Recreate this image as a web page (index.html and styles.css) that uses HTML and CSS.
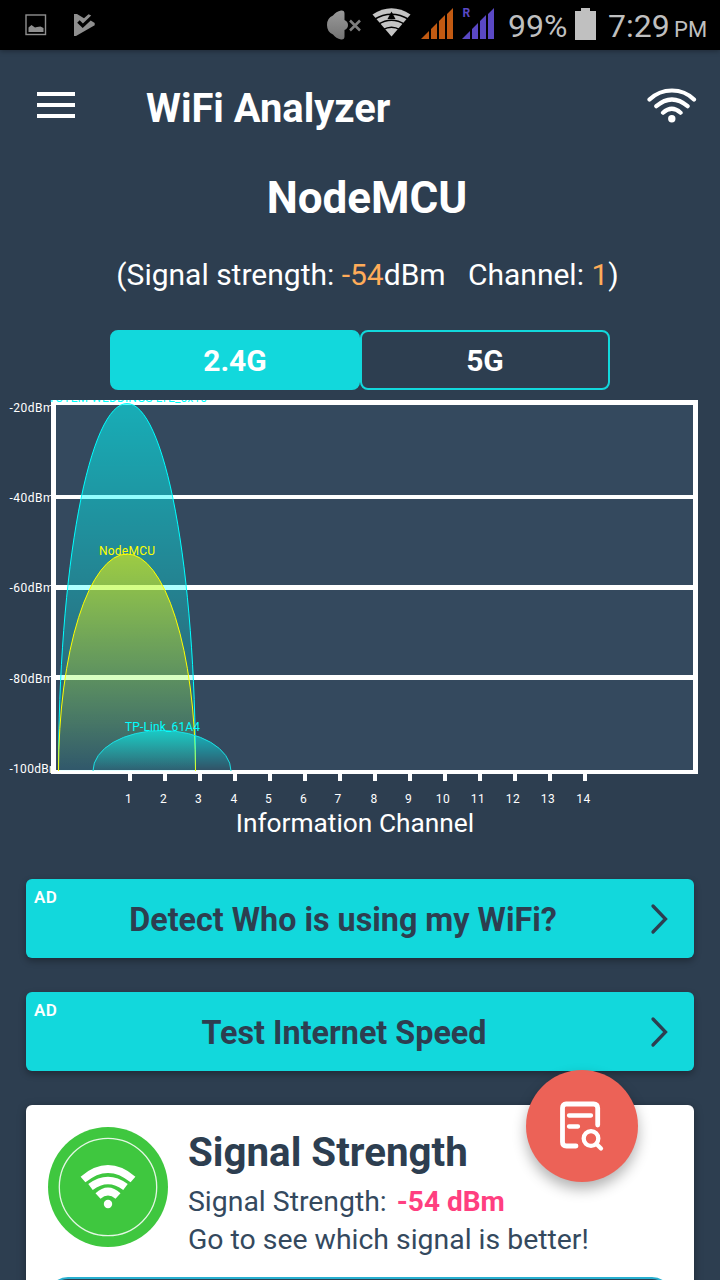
FILE: index.html
```html
<!DOCTYPE html>
<html lang="en">
<head>
<meta charset="utf-8">
<title>WiFi Analyzer</title>
<link rel="stylesheet" href="styles.css">
</head>
<body>
<div class="screen">
  <header class="status">
    <svg class="status-icons" width="500" height="50" viewBox="0 0 500 50">
      <rect x="26" y="15" width="19.500" height="19.500" fill="none" stroke="#8f8f8f" stroke-width="1.400"/>
      <path d="M28.500 32v-4.500l3-2.500 3.500 2.500 2-.5 3.500-.5 3 1.500V32z" fill="#8f8f8f"/>
      <path d="M74 14h3l7 4.200 4.500-4 2.700 1.200-8.300 8.100-3.200-3.200-2.500 2.500 5.500 5.200 8-7.500 4 2.500v2.300L76 36h-2z" fill="#8f8f8f"/>
      <linearGradient id="mute" x1="0" x2="0" y1="0" y2="1"><stop stop-color="#999"/><stop offset="1" stop-color="#747474"/></linearGradient>
      <path d="M341 10.500q3.500-.5 3.500 3V20q3.500 1.500 3.500 5t-3.500 5v6.500q0 3.500-3.500 3-5-1-8-5-6-2.500-6-9.500t6-9.500q3-4 8-5z" fill="url(#mute)"/>
      <path d="M350 20.500l10 10m0-10l-10 10" stroke="#7d7d7d" stroke-width="2.500"/>
      <path d="M391.500 36.500L372.500 14.500Q391.500 2 410.500 14.500z" fill="#c4c4c4"/>
      <path d="M374 19.500q17.500-10.500 35 0M378 24.500q13.500-8.500 27 0M383 29.700q8.500-5 17 0" fill="none" stroke="#000" stroke-width="1.500"/>
      <path d="M391.500 11.500l4 7.500h-8z" fill="#000"/>
      <path d="M421 39l8-8v8zm10-10l6-6v16h-6zm8-8l6-6v24h-6zm8-7l6-6v31h-6z" fill="#c25a12"/>
      <path d="M462 39l8-8v8zm10-10l6-6v16h-6zm8-8l6-6v24h-6zm8-7l6-6v31h-6z" fill="#5a48c4"/>
      <text class="roaming" x="462.500" y="16.500">R</text>
    </svg>
    <span class="percent">99%</span>
    <svg class="battery" width="21" height="32" viewBox="0 0 21 32"><path d="M6 0h9v3h6v29H0V3h6z" fill="#c0c0c0"/></svg>
    <span class="clock">7:29</span><span class="pm">PM</span>
  </header>

  <nav class="toolbar">
    <svg class="menu" width="38" height="26" viewBox="0 0 38 26"><path d="M0 2h38M0 13h38M0 24h38" stroke="#fff" stroke-width="4"/></svg>
    <h1 class="title">WiFi Analyzer</h1>
    <svg class="wifi" width="50" height="36" viewBox="0 0 50 36">
      <path d="M2.500 11.500C15-.5 35-.5 47 11.500M9.300 18.200q15.600-13.500 31.300 0M16 24.700q8.800-8 17.600 0" fill="none" stroke="#fff" stroke-width="4.200" stroke-linecap="round"/>
      <circle cx="24.800" cy="30.700" r="3.700" fill="#fff"/>
    </svg>
  </nav>

  <h2 class="network">NodeMCU</h2>
  <p class="details">(Signal strength: <b>-54</b>dBm &nbsp; Channel: <b>1</b>)</p>
  <div class="tabs">
    <div class="tab active">2.4G</div>
    <div class="tab">5G</div>
  </div>

  <svg class="chart" width="720" height="410" viewBox="0 400 720 410">
    <defs>
      <linearGradient id="cyan" x1="0" x2="0" y1="0" y2="1"><stop stop-color="#0ff" stop-opacity=".55"/><stop offset="1" stop-color="#0ff" stop-opacity=".08"/></linearGradient>
      <linearGradient id="low" x1="0" x2="0" y1="0" y2="1"><stop stop-color="#0ff" stop-opacity=".62"/><stop offset="1" stop-color="#0ff" stop-opacity=".04"/></linearGradient>
      <linearGradient id="yellow" x1="0" x2="0" y1="0" y2="1"><stop stop-color="#ff0" stop-opacity=".56"/><stop offset="1" stop-color="#ff0" stop-opacity="0"/></linearGradient>
    </defs>
    <g class="axis">
      <text x="9.500" y="412" textLength="44">-20dBm</text>
      <text x="9.500" y="502" textLength="44">-40dBm</text>
      <text x="9.500" y="592" textLength="44">-60dBm</text>
      <text x="9.500" y="683" textLength="44">-80dBm</text>
      <text x="9.500" y="773" textLength="50">-100dBm</text>
    </g>
    <rect x="51" y="400" width="647" height="374" fill="#fff"/>
    <path d="M56 405h637v90H56zM56 499h637v86H56zM56 590h637v85H56zM56 680h637v90H56z" fill="#34495e"/>
    <path d="M128 774h4v7h-4zM163 774h4v7h-4zM198 774h4v7h-4zM233 774h4v7h-4zM268 774h4v7h-4zM303 774h4v7h-4zM338 774h4v7h-4zM373 774h4v7h-4zM408 774h4v7h-4zM443 774h4v7h-4zM478 774h4v7h-4zM513 774h4v7h-4zM548 774h4v7h-4zM583 774h4v7h-4z" fill="#fff"/>
    <path class="curve" d="M58.500 771A68.500 367.500 0 0 1 195.500 771" fill="url(#cyan)" stroke="#0ff"/>
    <path class="curve" d="M58.500 771A68.500 217 0 0 1 195.500 771" fill="url(#yellow)" stroke="#ff0"/>
    <path class="curve" d="M93 771A69 40.500 0 0 1 231 771" fill="url(#low)" stroke="#1ce0e4"/>
    <g class="label">
      <text x="48" y="402" textLength="159" fill="#0ff">TOTEM WEDDINGS LTE_0x10</text>
      <text x="99" y="555" textLength="56" fill="#ff0">NodeMCU</text>
      <text x="125" y="731" textLength="75" fill="#0ff">TP-Link_61A4</text>
    </g>
    <g class="ticks">
      <text x="128.500" y="803">1</text><text x="163.500" y="803">2</text><text x="198.500" y="803">3</text><text x="234" y="803">4</text>
      <text x="268.500" y="803">5</text><text x="303.500" y="803">6</text><text x="338" y="803">7</text><text x="374" y="803">8</text>
      <text x="408.500" y="803">9</text><text x="443" y="803">10</text><text x="478" y="803">11</text><text x="513" y="803">12</text>
      <text x="548" y="803">13</text><text x="583.500" y="803">14</text>
    </g>
  </svg>
  <div class="caption">Information Channel</div>

  <a class="promo"><span class="ad">AD</span><span class="promo-text detect">Detect Who is using my WiFi?</span>
    <svg class="chevron" width="20" height="34" viewBox="0 0 20 34"><path d="M3 4l12.500 13L3 30" fill="none" stroke="#2d3e50" stroke-width="3.300" stroke-linecap="round"/></svg></a>
  <a class="promo"><span class="ad">AD</span><span class="promo-text speed">Test Internet Speed</span>
    <svg class="chevron" width="20" height="34" viewBox="0 0 20 34"><path d="M3 4l12.500 13L3 30" fill="none" stroke="#2d3e50" stroke-width="3.300" stroke-linecap="round"/></svg></a>

  <section class="card">
    <div class="card-row">
      <svg class="badge" width="120" height="120" viewBox="0 0 120 120">
        <circle cx="60" cy="60" r="60" fill="#3fc73f"/>
        <circle cx="60" cy="60" r="48.700" fill="none" stroke="#e4f7e4" stroke-width="1.300"/>
        <path d="M35 52.500q25-21 50 0M42.500 60q17.500-13 35 0M50 69q10-9 20 0" fill="none" stroke="#fff" stroke-width="7.500"/>
        <circle cx="60" cy="77" r="4.200" fill="#fff"/>
      </svg>
      <div class="card-copy">
        <h3 class="card-title">Signal Strength</h3>
        <p class="card-line">Signal Strength: <strong>-54 dBm</strong></p>
        <p class="card-line better">Go to see which signal is better!</p>
      </div>
    </div>
    <div class="card-button"></div>
  </section>

  <button class="fab">
    <svg width="48" height="52" viewBox="0 0 48 52" fill="none" stroke="#fff" stroke-width="4.300" stroke-linecap="round" stroke-linejoin="round">
      <path d="M39.700 25V8q0-4-4-4H8Q4.500 4 4.500 8v34q0 4 4 4H18" stroke-width="4.800"/><path d="M11 15.500h22M11 26.500h9"/><circle cx="33" cy="38.500" r="7.300"/><path d="M38.500 44l4.500 4.500"/>
    </svg>
  </button>
</div>
</body>
</html>
```

FILE: styles.css
```css
* { box-sizing: border-box; }
body { margin: 0; background: #2d3e50; font-family: Roboto, "Liberation Sans", sans-serif; color: #fff; }
h1, h2, h3, p { margin: 0; white-space: nowrap; }
.screen { position: relative; width: 720px; height: 1280px; overflow: hidden; display: flex; flex-direction: column; }
.status { height: 50px; flex: none; background: #000; display: flex; color: #bfbfbf; box-shadow: 0 1px 5px rgba(0,0,0,.35); white-space: nowrap; }
.status-icons { flex: none; }
.roaming { font: 700 12px Roboto, sans-serif; fill: #5a48c4; }
.percent { width: 75px; padding-left: 8px; font-size: 32px; line-height: 53px; flex: none; }
.battery { margin-top: 8px; flex: none; }
.clock { margin-left: 12px; width: 66px; font-size: 32px; line-height: 53px; flex: none; }
.pm { font-size: 22px; line-height: 59px; }
.toolbar { height: 110px; flex: none; display: flex; align-items: flex-start; padding: 0 23px 0 37px; }
.menu { margin-top: 42px; }
.title { margin-left: 71px; flex: 1; font-size: 39.9px; line-height: 48px; margin-top: 35px; font-weight: 700; }
.wifi { margin-top: 38px; }
.network { height: 76px; flex: none; text-align: center; padding-left: 14px; font-size: 44px; line-height: 76px; font-weight: 700; }
.details { height: 94px; flex: none; text-align: center; padding-left: 15px; font-size: 30px; line-height: 78px; }
.details b { font-weight: 400; color: #ffac59; }
.tabs { height: 60px; flex: none; margin: 0 110px; display: flex; }
.tab { flex: 1; border: 2px solid #12d8dc; border-radius: 8px; text-align: center; font-size: 30px; line-height: 58px; font-weight: 700; }
.tab.active { background: #12d8dc; }
.chart { margin-top: 10px; flex: none; overflow: hidden; }
.axis, .label { font-size: 12px; }
.axis { fill: #fff; }
.ticks { font-size: 12px; fill: #fff; text-anchor: middle; letter-spacing: .5px; }
.curve { stroke-width: 1; }
.caption { height: 69px; flex: none; text-align: center; padding-right: 10px; font-size: 26.3px; line-height: 26px; }
.promo { position: relative; height: 79px; flex: none; margin: 0 26px 34px; display: flex; align-items: center; justify-content: center; background: #12d8dc; border-radius: 6px; box-shadow: 0 3px 7px rgba(0,0,0,.32); }
.ad { position: absolute; left: 8px; top: 8px; font-size: 17px; line-height: 20px; font-weight: 600; letter-spacing: .5px; }
.promo-text { color: #2d3e50; font-size: 32.3px; font-weight: 700; white-space: nowrap; padding-top: 3px; }
.detect { padding-right: 34px; }
.speed { padding-right: 32px; }
.chevron { position: absolute; right: 24px; top: 22.5px; }
.card { height: 230px; flex: none; margin: 0 26px; padding: 22px 22px 0; background: #fff; border-radius: 6px 6px 0 0; box-shadow: 0 2px 8px rgba(0,0,0,.35); }
.card-row { display: flex; height: 150px; }
.badge { flex: none; }
.card-copy { margin-left: 20px; color: #34495e; }
.card-title { color: #2d3e50; font-size: 40.3px; line-height: 52px; height: 50px; font-weight: 700; }
.card-line { font-size: 28.4px; line-height: 39px; padding-top: 5px; height: 43px; }
.card-line strong { color: #ff3f80; font-weight: 700; font-size: 28px; margin-left: 3px; }
.card-line.better { padding-top: 0; }
.card-button { height: 80px; background: #2d3e50; border: 2px solid #28b0d0; border-radius: 20px; }
.fab { position: absolute; left: 526px; top: 1070px; width: 112px; height: 112px; padding: 0; border: 0; border-radius: 50%; background: #ec6257; box-shadow: 0 7px 14px rgba(0,0,0,.3); display: grid; place-items: center; }
```
